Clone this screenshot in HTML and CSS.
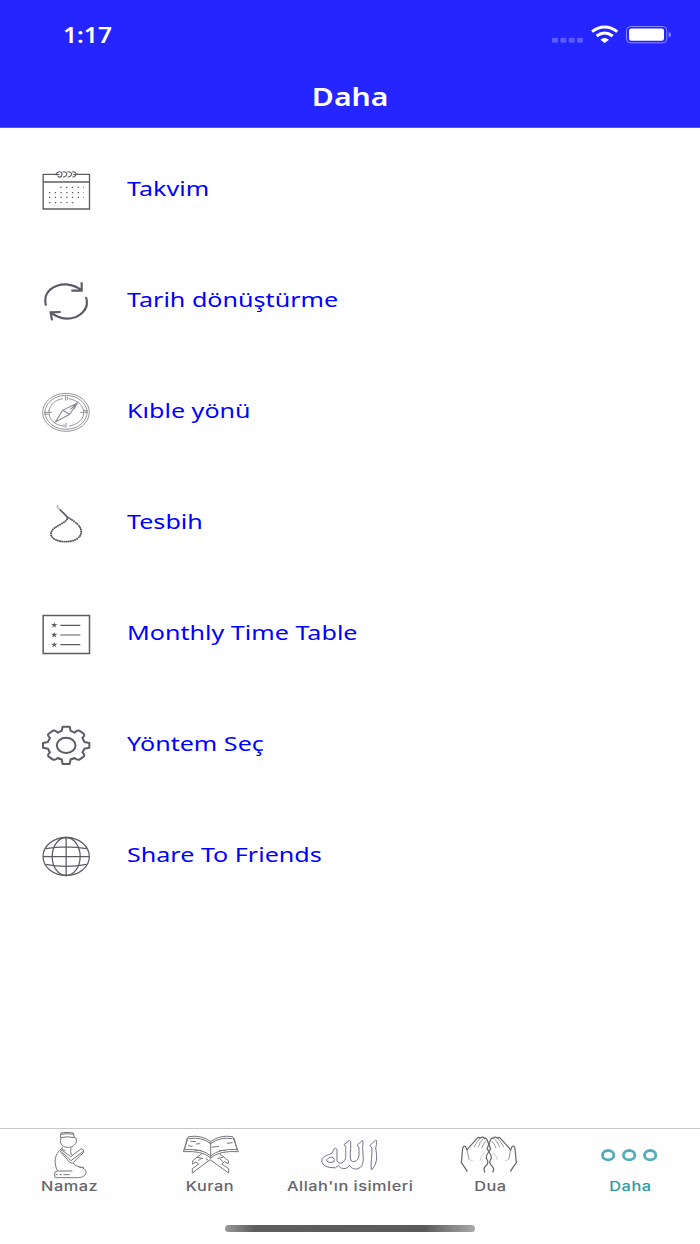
FILE: index.html
```html
<!DOCTYPE html>
<html lang="tr">
<head>
<meta charset="utf-8">
<title>Daha</title>
<link rel="stylesheet" href="styles.css">
</head>
<body>
<div class="app">
  <header class="header">
    <div class="status">
      <span class="time">1:17</span>
      <svg class="status-icons" viewBox="60 36 369 78">
        <g fill="#fff" fill-opacity=".25"><rect x="66" y="83" width="18" height="15" rx="4"/><rect x="91" y="83" width="18" height="15" rx="4"/><rect x="116" y="83" width="18" height="15" rx="4"/><rect x="141" y="83" width="18" height="15" rx="4"/></g>
        <g fill="none" stroke="#fff" stroke-width="9"><path d="M186 65Q224 37 262 65"/><path d="M200 78Q224 60 248 78"/></g>
        <path d="M211 89Q224 79 237 89L224 99Z" fill="#fff"/>
        <rect x="289.500" y="49.500" width="121" height="49" rx="12" fill="none" stroke="#fff" stroke-opacity=".45" stroke-width="3"/>
        <rect x="297" y="55.500" width="105" height="37" rx="7" fill="#fff"/>
        <path d="M416 66Q423 68 423 74T416 82Z" fill="#fff" fill-opacity=".5"/>
      </svg>
    </div>
    <h1 class="title"><span>Daha</span></h1>
  </header>

  <main class="list">
    <a class="row">
      <svg class="icon" viewBox="18 15 180 150">
        <path d="M78 43H39.500V147H178.500V43H142M39 66H178" stroke-width="4"/>
        <path d="M78 46C80 31 97 33 96 43S85 54 83 47M98 36C113 32 116 50 99 51M112 36C127 32 130 50 113 51M126 36C141 32 144 50 127 51M78 43H88M130 43H145" stroke-width="3.400"/>
        <path class="dots" d="M91 82H162M57 98H162M57 112H162M57 128H130"/>
      </svg>
      <span class="label">Takvim</span>
    </a>
    <a class="row">
      <svg class="icon" viewBox="18 18 180 150">
        <path d="M48 107C36 65 73 42 109 43Q137 46 155 61M155 37V62H124M168 81C181 118 147 146 110 146Q82 144 63 127M66 151L62 127L92 126" stroke-width="6.500"/>
      </svg>
      <span class="label">Tarih dönüştürme</span>
    </a>
    <a class="row">
      <svg class="icon compass" viewBox="18 21 180 150">
        <ellipse cx="108" cy="97" rx="70" ry="57"/><ellipse cx="108" cy="97" rx="63" ry="51"/>
        <path d="M117 56C142 61 158 75 161 93M161 102C158 121 141 134 117 138M99 138C75 135 60 121 57 102M57 93C61 73 76 59 99 56"/>
        <path d="M107 47V62M113 50V60M102 133V143M108 128V143M42 97H66M42 102H54M151 97H174M162 92H174M57 90V104M161 90V104"/>
        <path d="M76 126L98 91L142 69L119 103ZM98 91L119 103M104 94L112 99M121 88L142 69L132 87" stroke-width="3.400"/>
      </svg>
      <span class="label">Kıble yönü</span>
    </a>
    <a class="row">
      <svg class="icon" viewBox="18 9 180 150">
        <path d="M83 29L82 37L88 42" stroke="#bbb" stroke-width="5"/>
        <path d="M89 43L111 65" stroke-width="5"/>
        <path d="M111 65C119 86 61 91 63 118C66 147 151 150 154 111C153 90 132 79 111 65" stroke-width="3"/>
        <path class="beads" d="M111 65C119 86 61 91 63 118C66 147 151 150 154 111C153 90 132 79 111 65"/>
      </svg>
      <span class="label">Tesbih</span>
    </a>
    <a class="row">
      <svg class="icon" viewBox="18 12 180 150">
        <path d="M39.500 31.500H178.500V145.500H39.500Z" stroke-width="4.500"/>
        <path d="M91 61H151M91 90H151M91 119H151" stroke-width="3.600"/>
        <g fill="#5c5c66" stroke="none"><path id="star" d="M73 52L75 57H82L76 62L79 68L73 64L66 68L69 62L64 57H71Z"/><use href="#star" y="29.500"/><use href="#star" y="59"/></g>
      </svg>
      <span class="label">Monthly Time Table</span>
    </a>
    <a class="row">
      <svg class="icon" viewBox="18 15 180 150">
        <path d="M98 35H119L122 48Q128 49 134 53Q141 45 148 47L162 57Q165 62 157 69Q161 75 163 81L178 84V98L163 101Q161 107 157 112Q165 119 162 124L148 134Q141 136 134 129Q128 132 122 133L119 147H98L95 133Q89 132 83 129Q76 136 69 134L55 124Q52 119 60 112Q56 107 54 101L39 98V84L54 81Q56 75 60 69Q52 62 55 57L69 47Q76 45 83 53Q89 49 95 48Z" stroke-width="6" stroke-linejoin="round"/>
        <ellipse cx="108.500" cy="91" rx="28" ry="23" stroke-width="6"/>
      </svg>
      <span class="label">Yöntem Seç</span>
    </a>
    <a class="row">
      <svg class="icon" viewBox="18 18 180 150">
        <ellipse cx="108.500" cy="94.500" rx="69.500" ry="57"/><ellipse cx="108.500" cy="94.500" rx="42" ry="57"/>
        <path d="M108.500 37V152M39 95H178M47 71Q108 60 170 71M47 118Q108 130 170 118"/>
      </svg>
      <span class="label">Share To Friends</span>
    </a>
  </main>

  <nav class="tabs">
    <a class="tab">
      <svg class="tab-icon" viewBox="15 30 210 150">
        <path d="M91 53L93 39Q111 35 130 39L133 53Q111 48 91 53ZM92 43Q111 39 131 43M93 54C86 73 101 83 115 82C131 82 143 70 138 54L133 51M98 81L94 87C80 97 73 115 76 132Q78 146 83 153H127M92 96Q91 90 98 92L122 110L154 86Q163 87 161 97L127 130L118 126L92 96M97 97L123 122L160 94M124 105Q120 93 123 83M94 87L106 92M130 129C134 143 170 139 168 157C166 170 154 173 140 173H76Q71 165 75 156L83 153M148 142H162M77 164H83M89 164H96M100 164H119"/>
      </svg>
      <span class="tab-label">Namaz</span>
    </a>
    <a class="tab">
      <svg class="tab-icon" viewBox="435 30 210 150">
        <path d="M542 65Q516 44 476 50L460 95Q517 91 542 114Q569 91 625 95L608 50Q569 44 542 65V116M477 56Q516 50 542 71Q569 50 607 56M472 53L463 89Q518 85 542 108Q568 85 621 89L612 53M481 64L498 65M498 72L510 71M474 77L488 79M494 90L515 92M545 82L567 79M591 70L608 68M567 91L586 92M515 101L488 122V132L498 126L506 132L487 146V159L540 119L596 159V146L575 132L584 125L595 131V122L569 101M500 111L519 116M505 122L513 116M527 116L536 122M580 111L562 116M578 124L569 116"/>
      </svg>
      <span class="tab-label">Kuran</span>
    </a>
    <a class="tab">
      <svg class="tab-icon allah" viewBox="105 30 210 150">
        <path d="M157 98L162 87Q166 82 171 88V123Q179 135 190 126C203 116 194 92 198 82L192 74L208 61Q214 63 212 72C214 88 207 110 213 122C224 130 236 120 237 106V84L232 75L247 61Q251 65 248 79C248 106 255 130 241 142C225 153 214 144 208 136C199 151 181 147 175 136Q168 147 156 143C137 142 124 134 126 119C128 107 145 107 157 98ZM157 111C145 112 138 119 141 124Q148 130 161 126Q168 119 157 111ZM270 76L287 60Q293 62 287 84C292 112 292 133 274 150C271 134 277 103 276 85Z"/>
      </svg>
      <span class="tab-label">Allah'ın isimleri</span>
    </a>
    <a class="tab">
      <svg class="tab-icon dua" viewBox="525 30 210 150">
        <g id="hand"><path d="M562 155Q553 140 544 128L548 86Q550 75 557 80L561 90L569 80L591 56Q596 49 600 55Q609 48 613 55Q621 52 624 67L632 86L624 99Q618 107 619 115Q629 128 618 137Q608 145 615 157"/><path d="M561 90L567 119M600 55Q589 67 582 81M610 56Q600 65 594 82M619 62Q609 72 605 84" stroke-width="2"/><path d="M567 119L578 122M613 97Q603 110 600 121" stroke="#aaa" stroke-width="1.700"/></g>
        <use href="#hand" transform="matrix(-1 0 0 1 1253 0)"/>
      </svg>
      <span class="tab-label">Dua</span>
    </a>
    <a class="tab active">
      <svg class="tab-icon" viewBox="165 30 210 150">
        <g stroke="#54acb6" stroke-width="8.500"><ellipse cx="204.500" cy="105.500" rx="17" ry="14"/><ellipse cx="267.500" cy="105.500" rx="17" ry="14"/><ellipse cx="330.500" cy="105.500" rx="17" ry="14"/></g>
      </svg>
      <span class="tab-label">Daha</span>
    </a>
    <div class="home"></div>
  </nav>
</div>
</body>
</html>
```
FILE: styles.css
```css
* { box-sizing: border-box; }
body { margin: 0; background: #fff; }
.app { display: flex; flex-direction: column; width: 700px; height: 1244px; overflow: hidden; }
.header { height: 128px; background: #2525ff; border-bottom: 1px solid #5555ff; color: #fff; font-family: "Noto Sans", sans-serif; }
.status { display: flex; justify-content: space-between; height: 68px; padding: 22px 27px 0 63px; }
.time { font-size: 21px; line-height: 26px; font-weight: 600; transform: scaleX(1.17); transform-origin: left; }
.status-icons { width: 123px; height: 26px; }
.title { margin: 0; font-size: 24.5px; line-height: 58px; font-weight: 600; text-align: center; }
.title span { display: inline-block; transform: scaleX(1.23); }
.list { flex: 1; padding-top: 6px; }
.row { display: flex; align-items: center; gap: 31px; height: 111px; padding-left: 36px; }
.icon { width: 60px; height: 50px; flex: none; fill: none; stroke: #5c5c66; stroke-width: 3.8; }
.compass { stroke: #8c8c92; stroke-width: 2.8; }
.dots { stroke-width: 4; stroke-dasharray: 4 13.200; }
.beads { stroke-width: 5.5; stroke-dasharray: 4 2.500; }
.label { color: #00f; font: 20px/30px "Noto Sans", sans-serif; transform: scaleX(1.255); transform-origin: left; white-space: nowrap; margin-top: -1px; }
.tabs { display: grid; grid-template-columns: repeat(5, 1fr); grid-template-rows: 96px 18px; height: 116px; background: #fefefe; border-top: 1px solid #c8c8c8; }
.tab { display: flex; flex-direction: column; align-items: center; padding-top: 1px; color: #65656c; }
.tab-icon { width: 70px; height: 50px; fill: none; stroke: #77777d; stroke-width: 3; stroke-linejoin: round; }
.allah { stroke: #73738a; }
.dua { stroke: #66666c; stroke-width: 3.6; }
.tab-label { font: 500 13.5px/18px Inter, sans-serif; letter-spacing: .4px; transform: scaleX(1.21); white-space: nowrap; margin-top: -3px; }
.active { color: #2b9aa6; }
.home { grid-column: 1 / -1; justify-self: center; width: 250px; height: 7px; border-radius: 4px; background: linear-gradient(90deg, #999 0, #5d5d5d 12%, #5a5a5a 80%, #aaa 100%); }
```
